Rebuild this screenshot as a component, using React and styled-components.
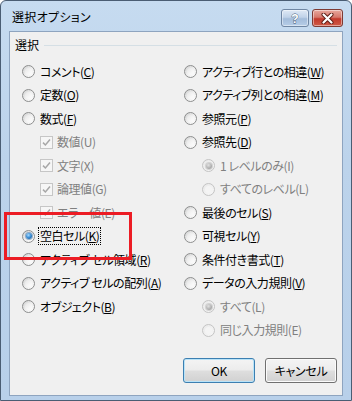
import React from "react";
import styled, { createGlobalStyle, css } from "styled-components";

const Global = createGlobalStyle`
  html, body { margin: 0; padding: 0; background: #ffffff; }
  body { font-family: "Noto Sans CJK JP", "Noto Sans", sans-serif; }
`;

const FONT = `"Noto Sans CJK JP", "Noto Sans", sans-serif`;

const Window = styled.div`
  position: relative;
  width: 352px;
  height: 401px;
  box-sizing: border-box;
  border: 1px solid #4a5d73;
  border-radius: 6px 6px 0 0;
  background: linear-gradient(180deg, #c6dbf0 0%, #bcd3eb 40%, #b8d0ea 100%);
  display: flex;
  flex-direction: column;
  font-family: ${FONT};
  font-feature-settings: "palt";
`;

const TitleBar = styled.div`
  height: 30px;
  flex: none;
  display: flex;
  align-items: center;
  padding: 0 8px 0 11px;
`;

const Title = styled.div`
  font-size: 12px;
  color: #000;
  letter-spacing: 0.3px;
`;

const CaptionButtons = styled.div`
  margin-left: auto;
  align-self: flex-start;
  margin-top: 8px;
  display: flex;
  gap: 3px;
`;

const CaptionButton = styled.div`
  height: 18px;
  width: ${(p) => (p.$close ? "31px" : "28px")};
  box-sizing: border-box;
  border-radius: 3px;
  display: flex;
  align-items: center;
  justify-content: center;
  border: 1px solid ${(p) => (p.$close ? "#7e3a33" : "#6f86a3")};
  background: ${(p) =>
    p.$close
      ? "linear-gradient(180deg, #e8a89e 0%, #d6786c 45%, #c3392c 55%, #cf5b47 100%)"
      : "linear-gradient(180deg, #dfe9f5 0%, #c0d2e8 45%, #a3bcda 55%, #b6cde7 100%)"};
  box-shadow: inset 0 0 0 1px rgba(255, 255, 255, 0.45);
`;

const Client = styled.div`
  flex: 1;
  margin: 0 8px 4px 8px;
  border: 1px solid #8ea4bf;
  background: #f0f0f0;
  padding: 5px 5px 0 5px;
  display: flex;
  flex-direction: column;
`;

const GroupHeader = styled.div`
  height: 16px;
  display: flex;
  align-items: center;
  gap: 5px;
`;

const GroupLabel = styled.span`
  font-size: 12px;
  line-height: 16px;
  color: #000;
`;

const GroupLine = styled.span`
  flex: 1;
  height: 1px;
  background: #d5dfe5;
  margin-top: 1px;
`;

const Columns = styled.div`
  margin-top: 7px;
  padding-left: 7px;
  display: grid;
  grid-template-columns: 162px 1fr;
`;

const Column = styled.div`
  display: flex;
  flex-direction: column;
`;

const Row = styled.div`
  height: 23.5px;
  display: flex;
  align-items: center;
  padding-left: ${(p) => (p.$sub ? "18px" : "0")};
  gap: ${(p) => (p.$check ? "4px" : "5px")};
`;

const Radio = styled.span`
  position: relative;
  flex: none;
  width: 13px;
  height: 13px;
  box-sizing: border-box;
  border-radius: 50%;
  border: 1px solid ${(p) => (p.$disabled ? "#c4c4c4" : "#8d8e8e")};
  background: ${(p) =>
    p.$disabled
      ? "linear-gradient(135deg, #e9e9e9 0%, #f7f7f7 100%)"
      : "linear-gradient(135deg, #cfd0d0 0%, #ececec 45%, #ffffff 100%)"};
  &::before {
    content: "";
    position: absolute;
    inset: 2px;
    border-radius: 50%;
    background: ${(p) =>
      p.$disabled
        ? "#f4f4f4"
        : "linear-gradient(135deg, #e6e6e6 0%, #f6f6f6 60%, #fdfdfd 100%)"};
  }
  ${(p) =>
    p.$checked &&
    css`
      &::after {
        content: "";
        position: absolute;
        left: 2.5px;
        top: 2.5px;
        width: 6px;
        height: 6px;
        border-radius: 50%;
        background: ${p.$disabled
          ? "radial-gradient(circle at 40% 35%, #e2e2e2 0%, #b3b3b3 55%, #8f8f8f 100%)"
          : "radial-gradient(circle at 40% 35%, #a8dcff 0%, #3d8fd6 45%, #0b4e8e 100%)"};
        box-shadow: 0 0 0 1px ${p.$disabled ? "rgba(150,150,150,0.35)" : "rgba(30,90,150,0.45)"};
      }
    `}
`;

const CheckBox = styled.span`
  flex: none;
  width: 13px;
  height: 13px;
  box-sizing: border-box;
  border: 1px solid #c6c6c6;
  background: #f6f6f6;
  display: flex;
  align-items: center;
  justify-content: center;
`;

const Label = styled.span`
  font-size: 12px;
  line-height: 16px;
  letter-spacing: -0.45px;
  white-space: nowrap;
  color: ${(p) => (p.$disabled ? "#808080" : "#000")};
  padding: 0 1px;
  margin-left: -1px;
  outline: ${(p) => (p.$focus ? "1px dotted #000" : "none")};
  u {
    text-decoration: underline;
    text-underline-offset: 1px;
  }
`;

const ButtonRow = styled.div`
  margin-top: 16px;
  display: flex;
  justify-content: flex-end;
  gap: 10px;
`;

const Button = styled.button`
  width: 72px;
  height: 25px;
  box-sizing: border-box;
  border-radius: 3px;
  border: 1px solid ${(p) => (p.$default ? "#3c7fb1" : "#707070")};
  background: linear-gradient(180deg, #f4f4f4 0%, #ececec 48%, #dedede 52%, #d1d1d1 100%);
  box-shadow: inset 0 0 0 1px ${(p) => (p.$default ? "#b9e3f8" : "#fbfbfb")};
  font-family: ${FONT};
  font-feature-settings: "palt";
  font-size: 12px;
  letter-spacing: -0.3px;
  color: #000;
  padding: 0;
`;

const Highlight = styled.div`
  position: absolute;
  left: 3px;
  top: 211px;
  width: 128px;
  height: 48px;
  box-sizing: border-box;
  border: 3px solid #ec1c24;
  pointer-events: none;
`;

function HelpGlyph() {
  return (
    <svg width="12" height="13" viewBox="0 0 12 13">
      <text
        x="6"
        y="11"
        textAnchor="middle"
        fontFamily="Liberation Sans, sans-serif"
        fontWeight="bold"
        fontSize="12"
        fill="#ffffff"
        stroke="#34506f"
        strokeWidth="0.8"
        paintOrder="stroke"
      >
        ?
      </text>
    </svg>
  );
}

function CloseGlyph() {
  return (
    <svg width="13" height="11" viewBox="0 0 13 11">
      <path d="M2.5 1.5 L10.5 9.5 M10.5 1.5 L2.5 9.5" stroke="#5a1a12" strokeWidth="4" strokeLinecap="round" />
      <path d="M2.5 1.5 L10.5 9.5 M10.5 1.5 L2.5 9.5" stroke="#ffffff" strokeWidth="2.2" strokeLinecap="round" />
    </svg>
  );
}

function CheckMark() {
  return (
    <svg width="9" height="9" viewBox="0 0 9 9">
      <path d="M1 4.6 L3.4 7 L8 1.6" fill="none" stroke="#a7a7a7" strokeWidth="1.5" />
    </svg>
  );
}

function Text({ text, m, disabled, focus }) {
  return (
    <Label $disabled={disabled} $focus={focus}>
      {text}
      {m ? (
        disabled ? (
          `(${m})`
        ) : (
          <>
            (<u>{m}</u>)
          </>
        )
      ) : null}
    </Label>
  );
}

const left = [
  { type: "radio", text: "コメント", m: "C" },
  { type: "radio", text: "定数", m: "O" },
  { type: "radio", text: "数式", m: "F" },
  { type: "check", text: "数値", m: "U", sub: true, disabled: true, checked: true },
  { type: "check", text: "文字", m: "X", sub: true, disabled: true, checked: true },
  { type: "check", text: "論理値", m: "G", sub: true, disabled: true, checked: true },
  { type: "check", text: "エラー値", m: "E", sub: true, disabled: true, checked: true },
  { type: "radio", text: "空白セル", m: "K", checked: true, focus: true },
  { type: "radio", text: "アクティブ セル領域", m: "R" },
  { type: "radio", text: "アクティブ セルの配列", m: "A" },
  { type: "radio", text: "オブジェクト", m: "B" },
];

const right = [
  { type: "radio", text: "アクティブ行との相違", m: "W" },
  { type: "radio", text: "アクティブ列との相違", m: "M" },
  { type: "radio", text: "参照元", m: "P" },
  { type: "radio", text: "参照先", m: "D" },
  { type: "radio", text: "1 レベルのみ", m: "I", sub: true, disabled: true, checked: true },
  { type: "radio", text: "すべてのレベル", m: "L", sub: true, disabled: true },
  { type: "radio", text: "最後のセル", m: "S" },
  { type: "radio", text: "可視セル", m: "Y" },
  { type: "radio", text: "条件付き書式", m: "T" },
  { type: "radio", text: "データの入力規則", m: "V" },
  { type: "radio", text: "すべて", m: "L", sub: true, disabled: true, checked: true },
  { type: "radio", text: "同じ入力規則", m: "E", sub: true, disabled: true },
];

function Item({ item }) {
  const isCheck = item.type === "check";
  return (
    <Row $sub={item.sub} $check={isCheck}>
      {isCheck ? (
        <CheckBox>{item.checked && <CheckMark />}</CheckBox>
      ) : (
        <Radio $checked={item.checked} $disabled={item.disabled} />
      )}
      <Text text={item.text} m={item.m} disabled={item.disabled} focus={item.focus} />
    </Row>
  );
}

export default function App() {
  return (
    <>
      <Global />
      <Window>
        <TitleBar>
          <Title>選択オプション</Title>
          <CaptionButtons>
            <CaptionButton>
              <HelpGlyph />
            </CaptionButton>
            <CaptionButton $close>
              <CloseGlyph />
            </CaptionButton>
          </CaptionButtons>
        </TitleBar>
        <Client>
          <GroupHeader>
            <GroupLabel>選択</GroupLabel>
            <GroupLine />
          </GroupHeader>
          <Columns>
            <Column>
              {left.map((it, i) => (
                <Item key={i} item={it} />
              ))}
            </Column>
            <Column>
              {right.map((it, i) => (
                <Item key={i} item={it} />
              ))}
            </Column>
          </Columns>
          <ButtonRow>
            <Button $default>OK</Button>
            <Button>キャンセル</Button>
          </ButtonRow>
        </Client>
        <Highlight />
      </Window>
    </>
  );
}
